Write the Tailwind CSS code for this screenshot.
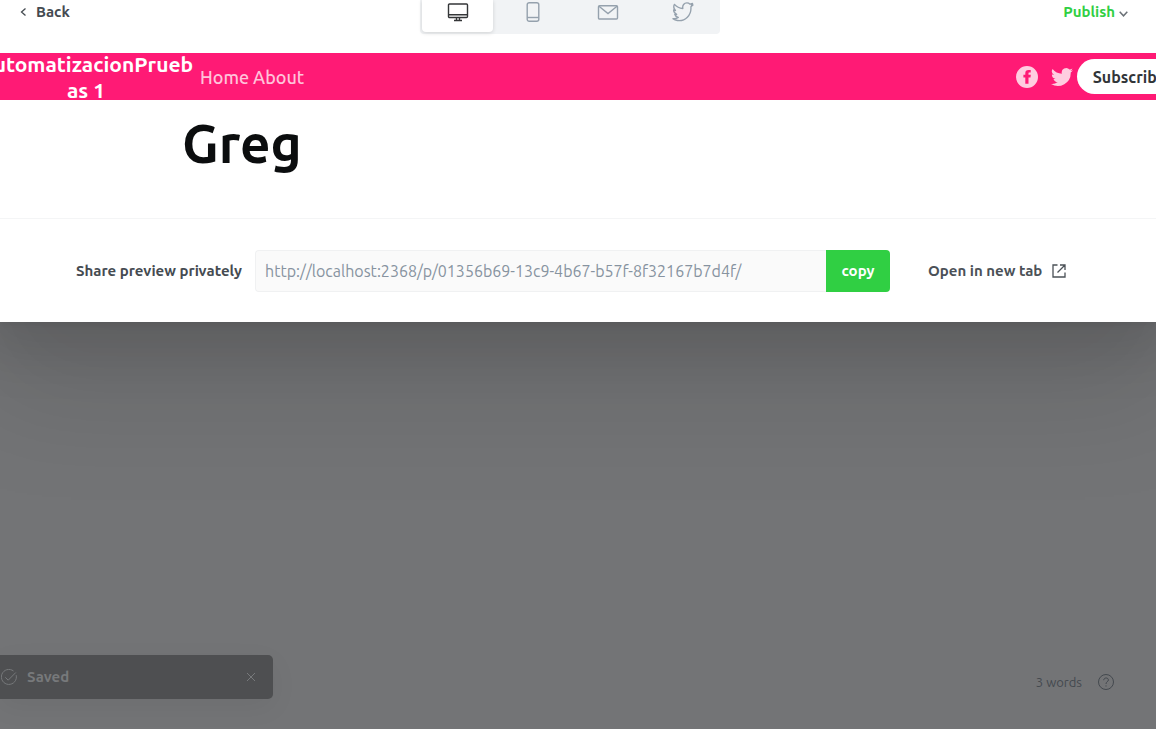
<!DOCTYPE html>
<html lang="en">
<head>
<meta charset="utf-8">
<meta name="viewport" content="width=device-width, initial-scale=1">
<title>Preview</title>
<script src="https://cdn.jsdelivr.net/npm/@tailwindcss/browser@4"></script>
</head>
<body class="flex min-h-screen flex-col overflow-x-hidden bg-[#737476] font-['Ubuntu','Noto_Sans',sans-serif] text-[15px] leading-5 text-[#454b51]">
<main class="bg-white shadow-[0_3px_7px_rgba(0,0,0,0.06),0_15px_50px_16px_rgba(0,0,0,0.10),0_60px_110px_16px_rgba(0,0,0,0.10)]">
  <header class="grid h-[53px] grid-cols-[1fr_auto_1fr] items-start pl-3 pr-7">
    <button class="flex h-6 items-center gap-[9px] justify-self-start pl-2 font-semibold">
      <svg class="h-2 w-[7px]" viewBox="0 0 7 8" fill="none" stroke="currentColor" stroke-width="1.3"><path d="M5.5 .5 1.5 4l4 3.500"/></svg>
      Back
    </button>
    <div class="flex h-[34px] gap-1 rounded-b bg-[#f1f3f5] px-[2px] pb-[2px] text-[#95a1ad]" role="group" aria-label="Preview type">
      <button aria-label="Desktop" class="flex w-[71px] justify-center rounded-b-sm bg-white pt-[2px] text-[#343638] shadow-[0_1px_4px_rgba(0,0,0,0.14)]">
        <svg class="h-5 w-[22px]" viewBox="0 0 22 20" fill="none" stroke="currentColor" stroke-width="1.4"><rect x="1.500" y="2" width="19" height="13.500" rx="1"/><path d="M1.500 12.800h19M9.500 15.500v3M12.500 15.500v3M7 18.500h8"/></svg>
      </button>
      <button aria-label="Mobile" class="flex w-[71px] justify-center pt-[2px]">
        <svg class="h-5 w-[14px]" viewBox="0 0 14 20" fill="none" stroke="currentColor" stroke-width="1.400"><rect x="1.200" y=".7" width="11.600" height="18.600" rx="2"/><path d="M1.200 15.500h11.600"/></svg>
      </button>
      <button aria-label="Email" class="flex w-[71px] justify-center pt-[2px]">
        <svg class="h-5 w-[22px]" viewBox="0 0 22 20" fill="none" stroke="currentColor" stroke-width="1.4"><rect x="1.500" y="3.700" width="19" height="13.300" rx="1"/><path d="m2 4.200 9 7.300 9-7.300"/></svg>
      </button>
      <button aria-label="Twitter" class="flex w-[71px] justify-center pt-[2px]">
        <svg class="h-5 w-[22px]" viewBox="0 0 24 22" fill="none" stroke="currentColor" stroke-width="1.500" stroke-linejoin="round"><path d="M23 3.200 20.700 5.200C21.500 14.500 14.500 21.500 5.800 20.300c-1.900-.2-3.500-.9-4.800-2 2.200.2 4.300-.2 5.800-1.400-2-.5-3.300-1.500-3.800-3.200h2C3 12.500 1.700 11 1.700 8.700l2 .6C1.800 7.400 1.400 4.800 2.600 2.600c2.400 2.700 5.300 4.200 9.200 4.500C11.100 3.700 13.300 1 16.300 1c1.400 0 2.500.5 3.400 1.400L22.500 1.500 21.300 3.500z"/></svg>
      </button>
    </div>
    <button class="flex h-6 items-center gap-1 justify-self-end font-semibold text-[#30cf43]">
      Publish
      <svg class="mt-1 h-[6px] w-[9px]" viewBox="0 0 9 6" fill="none" stroke="#6b7177" stroke-width="1.500"><path d="m.7.800 3.800 4L8.300.800"/></svg>
    </button>
  </header>

  <section>
    <nav class="flex h-[47px] items-center overflow-hidden bg-[#ff1a75] text-lg text-[#ffc3da]">
      <a href="#" class="-ml-6 w-[220px] shrink-0 text-center text-[21px] leading-[26px] font-bold whitespace-nowrap text-white">AutomatizacionPrueb<br>as 1</a>
      <div class="ml-1 flex flex-1 gap-1 font-medium">
        <a href="#">Home</a>
        <a href="#">About</a>
      </div>
      <div class="flex shrink-0 items-center">
        <a href="#" aria-label="Facebook" class="mr-3 text-[#ffcde0]">
          <svg class="size-6" viewBox="0 0 24 24" fill="currentColor"><path fill-rule="evenodd" d="M12 1a11 11 0 1 0 0 22 11 11 0 0 0 0-22Zm1.500 17.800h-3.200v-6.300H8.400V9.800h1.900V8.200c0-2.200 1-3.300 3.400-3.300h2V7.600h-1.300c-.8 0-.9.3-.9 1v1.200h2.300l-.3 2.700h-2z"/></svg>
        </a>
        <a href="#" aria-label="Twitter" class="mr-1 text-[#ffcde0]">
          <svg class="size-[22px]" viewBox="0 0 24 24" fill="currentColor"><path d="M23.950 4.600a10 10 0 0 1-2.800.8 4.900 4.900 0 0 0 2.200-2.700 9.900 9.900 0 0 1-3.100 1.200 4.900 4.900 0 0 0-8.400 4.500A14 14 0 0 1 1.700 3.200a4.900 4.900 0 0 0 1.500 6.500 4.900 4.900 0 0 1-2.200-.6v.1a4.900 4.900 0 0 0 3.900 4.800 5 5 0 0 1-2.200.1 4.900 4.900 0 0 0 4.600 3.400A9.900 9.900 0 0 1 0 19.500a14 14 0 0 0 21.500-12.400 10 10 0 0 0 2.450-2.500z"/></svg>
        </a>
        <button class="-mr-[26px] h-[35px] rounded-full bg-white px-4 text-base font-semibold text-[#313538]">Subscribe</button>
      </div>
    </nav>
    <h1 class="flex h-[118px] items-start pt-2 pl-[182px] text-[53px] leading-[72px] font-bold text-[#0b0d0e]">Greg</h1>
  </section>

  <footer class="flex h-[104px] items-center border-t border-[#f4f5f6] pl-[76px] pr-[90px]">
    <label for="url" class="w-[179px] shrink-0 font-semibold whitespace-nowrap">Share preview privately</label>
    <input id="url" type="text" readonly value="http://localhost:2368/p/01356b69-13c9-4b67-b57f-8f32167b7d4f/" class="h-[42px] min-w-0 flex-1 rounded-l border border-r-0 border-[#f0f1f2] bg-[#fafafa] px-[9px] text-base text-[#8793a0] outline-none">
    <button class="h-[42px] w-16 rounded-r-sm bg-[#30cf43] font-semibold text-white">copy</button>
    <a href="#" class="ml-[38px] flex w-[138px] shrink-0 items-center justify-between font-semibold whitespace-nowrap text-[#4b5157]">
      Open in new tab
      <svg class="size-[14px]" viewBox="0 0 14 14" fill="none" stroke="currentColor" stroke-width="1.300"><path d="M5.500 1H1v12h12V8.500M8 1h5v5M5.500 8.500 13 1"/></svg>
    </a>
  </footer>
</main>

<div class="mt-auto flex h-[74px] items-start justify-between pr-[42px]">
  <div role="status" class="flex h-11 w-[273px] items-center rounded-r-[5px] bg-[#4e4f51] pr-[17px] font-semibold text-[#77797b] shadow-[0_8px_28px_rgba(0,0,0,0.05)]">
    <svg class="mr-[10px] ml-[1px] size-4" viewBox="0 0 16 16" fill="none" stroke="currentColor"><path d="M15.200 6.200A7.500 7.500 0 1 1 12.500 2M4.300 8.300l2.900 2.900 7.600-7.700"/></svg>
    <span class="flex-1">Saved</span>
    <button aria-label="Close"><svg class="size-[10px]" viewBox="0 0 10 10" fill="none" stroke="currentColor"><path d="m1 1 8 8M9 1 1 9"/></svg></button>
  </div>
  <div class="mt-[17px] flex items-center gap-4 text-[13px] text-[#44494f]">
    3 words
    <button aria-label="Help"><svg class="block size-4" viewBox="0 0 16 16" fill="none" stroke="currentColor"><circle cx="8" cy="8" r="7.500"/><path d="M5.700 6.200c.1-3 4.700-2.900 4.700-.2C10.400 7.700 8 7.600 8 10M8 11.400v1.100"/></svg></button>
  </div>
</div>
</body>
</html>
